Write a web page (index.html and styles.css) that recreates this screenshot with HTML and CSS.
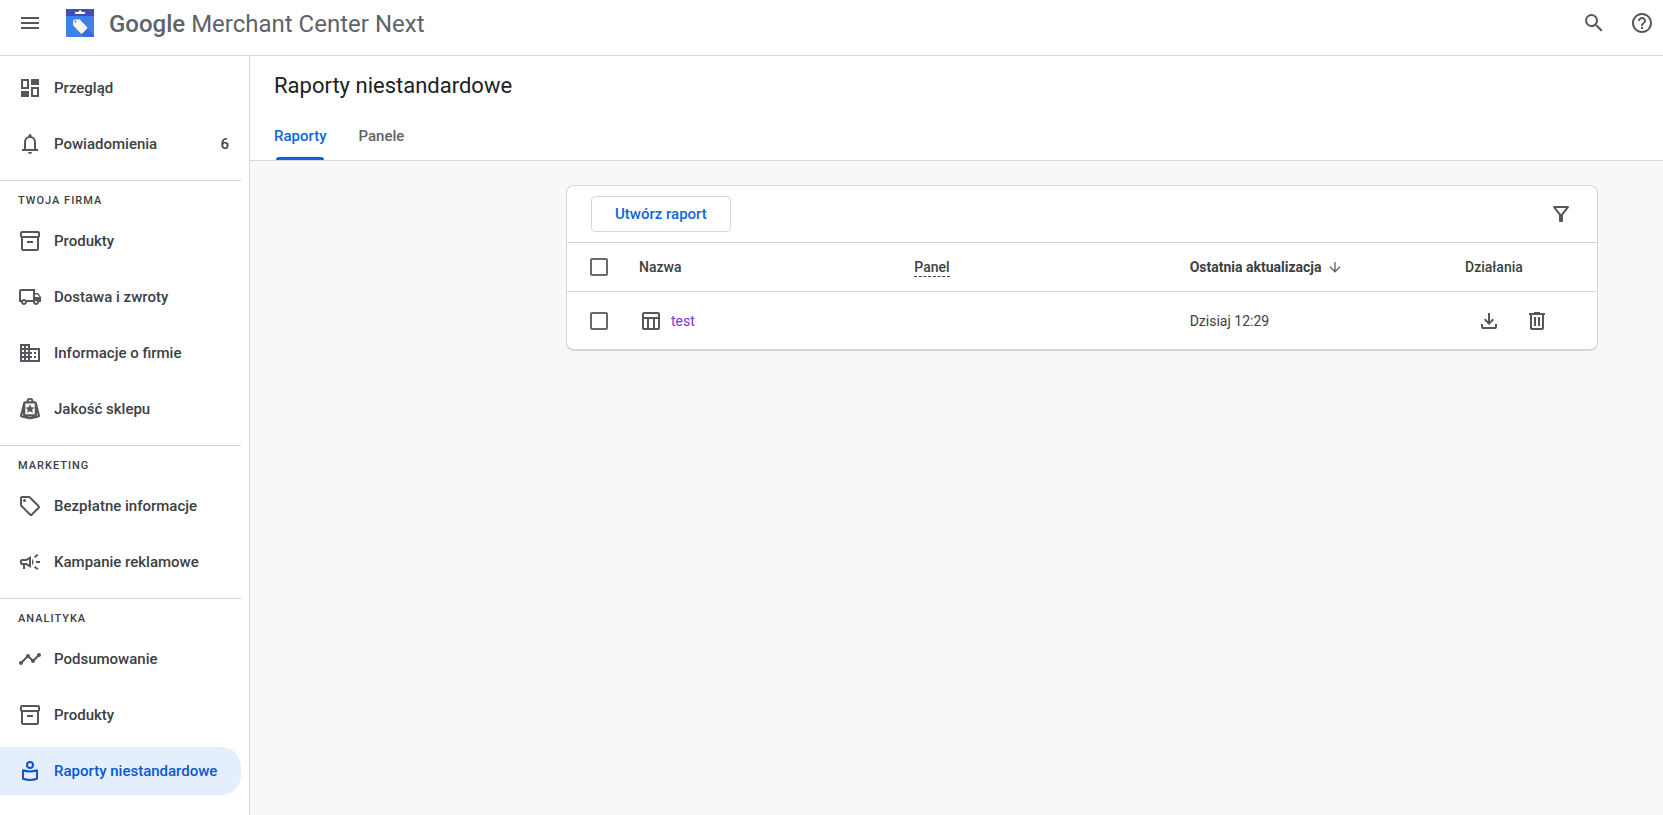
FILE: index.html
```html
<!DOCTYPE html>
<html lang="pl">
<head>
<meta charset="utf-8">
<meta name="viewport" content="width=device-width, initial-scale=1">
<title>Google Merchant Center Next</title>
<link rel="stylesheet" href="styles.css">
</head>
<body>
<svg class="sprite" aria-hidden="true">
  <symbol id="archive" viewBox="0 0 24 24"><path d="M20 2H4c-1 0-2 .9-2 2v3.010c0 .72.43 1.340 1 1.690V20c0 1.100 1.100 2 2 2h14c.9 0 2-.9 2-2V8.700c.57-.35 1-.97 1-1.690V4c0-1.100-1-2-2-2zm-1 18H5V9h14v11zm1-13H4V4h16v3zM9 12h6v2H9z"/></symbol>
</svg>
<header class="topbar">
  <button class="icon-btn" aria-label="Menu"><svg class="icon" viewBox="0 0 24 24"><path d="M3 18h18v-2H3v2zm0-5h18v-2H3v2zm0-7v2h18V6H3z"/></svg></button>
  <a class="brand" href="#">
    <svg class="logo" viewBox="0 0 28 28" aria-hidden="true">
      <rect width="28" height="28" rx="1" fill="#4080ec"/>
      <path d="M21 19l7 7v1q0 1-1 1H18l-4-4z" fill="#356fd6"/>
      <path d="M0 7V1q0-1 1-1h26q1 0 1 1v6z" fill="#3f51b0"/>
      <path d="M9 3h3.500a1.700 1.700 0 0 1 3.400 0H19v2H9z" fill="#fff"/>
      <path d="M7 12q0-1.500 1.500-1.500l5-.2 7.700 7.900q.6.700 0 1.400l-4.900 4.900q-.7.600-1.400 0L7.200 16.500z" fill="#f5f5f5"/>
      <circle cx="9.300" cy="12.600" r="1" fill="#4080ec"/>
    </svg>
    <span class="brand-name"><span class="google">Google</span> Merchant Center Next</span>
  </a>
  <div class="top-actions">
    <button class="icon-btn" aria-label="Szukaj"><svg class="icon" viewBox="0 0 24 24"><path d="M15.500 14h-.79l-.28-.27A6.470 6.470 0 0 0 16 9.500 6.500 6.500 0 1 0 9.500 16c1.610 0 3.090-.59 4.230-1.570l.27.28v.79l5 4.990L20.490 19l-4.990-5zm-6 0C7.010 14 5 11.990 5 9.500S7.010 5 9.500 5 14 7.010 14 9.500 11.990 14 9.500 14z"/></svg></button>
    <button class="icon-btn" aria-label="Pomoc"><svg class="icon" viewBox="0 0 24 24"><path d="M11 18h2v-2h-2v2zm1-16C6.480 2 2 6.480 2 12s4.480 10 10 10 10-4.480 10-10S17.520 2 12 2zm0 18c-4.410 0-8-3.590-8-8s3.590-8 8-8 8 3.590 8 8-3.590 8-8 8zm0-14c-2.210 0-4 1.790-4 4h2c0-1.100.9-2 2-2s2 .9 2 2c0 2-3 1.750-3 5h2c0-2.250 3-2.500 3-5 0-2.210-1.790-4-4-4z"/></svg></button>
  </div>
</header>
<div class="layout">
  <nav class="sidebar">
    <ul class="nav-group">
      <li><a class="nav-item" href="#"><svg class="icon" viewBox="0 0 24 24"><path d="M19 13v6h-4v-6h4M9 5v6H5V5h4m12-2h-8v6h8V3zM11 3H3v10h8V3zm10 8h-8v10h8V11zm-10 4H3v6h8v-6z"/></svg>Przegląd</a></li>
      <li><a class="nav-item" href="#"><svg class="icon" viewBox="0 0 24 24"><path d="M4 19v-2h2v-7c0-2.800 1.800-5.100 4.500-5.800V3.500a1.500 1.500 0 0 1 3 0v.7C16.200 4.900 18 7.200 18 10v7h2v2zm8 3a2 2 0 0 1-2-2h4a2 2 0 0 1-2 2zM8 17h8v-7a4 4 0 0 0-8 0z"/></svg>Powiadomienia<span class="count">6</span></a></li>
    </ul>
    <h2 class="nav-title">Twoja firma</h2>
    <ul class="nav-group">
      <li><a class="nav-item" href="#"><svg class="icon"><use href="#archive"/></svg>Produkty</a></li>
      <li><a class="nav-item" href="#"><svg class="icon" viewBox="0 0 24 24"><path d="M20 8h-3V4H3c-1.100 0-2 .9-2 2v11h2c0 1.660 1.340 3 3 3s3-1.340 3-3h6c0 1.660 1.340 3 3 3s3-1.340 3-3h2v-5l-3-4zM6 18c-.55 0-1-.45-1-1s.45-1 1-1 1 .45 1 1-.45 1-1 1zm9-3H8.220c-.55-.61-1.330-1-2.220-1s-1.670.39-2.220 1H3V6h12v9zm3 3c-.55 0-1-.45-1-1s.45-1 1-1 1 .45 1 1-.45 1-1 1zm-1-6V9.500h2.500l1.960 2.500H17z"/></svg>Dostawa i zwroty</a></li>
      <li><a class="nav-item" href="#"><svg class="icon" viewBox="0 0 24 24"><path d="M12 7V3H2v18h20V7H12zM6 19H4v-2h2v2zm0-4H4v-2h2v2zm0-4H4V9h2v2zm0-4H4V5h2v2zm4 12H8v-2h2v2zm0-4H8v-2h2v2zm0-4H8V9h2v2zm0-4H8V5h2v2zm10 12h-8v-2h2v-2h-2v-2h2v-2h-2V9h8v10zm-2-8h-2v2h2v-2zm0 4h-2v2h2v-2z"/></svg>Informacje o firmie</a></li>
      <li><a class="nav-item" href="#"><svg class="icon" viewBox="0 0 24 24"><path fill-rule="evenodd" d="M8.500 4.300a3.500 3.200 0 0 1 7 0H17q1.500 0 1.800 1.500L22 18.500q.3 1.700-1.500 2.100L14 22q-2 .4-4 0l-6.500-1.400q-1.800-.4-1.500-2.100L5.200 5.800Q5.500 4.300 7 4.300zm2 0h3a1.500 1.500 0 0 0-3 0zM7.300 6.600v10.600h9.400V6.600zM5 15.500l-.8 3 1.300.3q-.5-.5-.5-1.300zm14 0v2q0 .8-.5 1.300l1.300-.3zM9.500 19.600l2.500.5 2.500-.5z"/><path d="M12 7.300l1.350 3 3.250.3-2.450 2.150.75 3.250L12 14.300 9.100 16l.75-3.250L7.400 10.600l3.250-.3z"/></svg>Jakość sklepu</a></li>
    </ul>
    <h2 class="nav-title">Marketing</h2>
    <ul class="nav-group">
      <li><a class="nav-item" href="#"><svg class="icon" viewBox="0 0 24 24"><path d="M21.410 11.580l-9-9C12.050 2.220 11.550 2 11 2H4c-1.100 0-2 .9-2 2v7c0 .55.22 1.050.59 1.420l9 9c.36.36.86.58 1.410.58s1.050-.22 1.410-.59l7-7c.37-.36.59-.86.59-1.410s-.23-1.060-.59-1.420zM13 20.010L4 11V4h7v-.01l9 9-7 7.020z"/><circle cx="6.500" cy="6.500" r="1.500"/></svg>Bezpłatne informacje</a></li>
      <li><a class="nav-item" href="#"><svg class="icon" viewBox="0 0 24 24"><path d="M18 11v2h4v-2h-4zm-2 6.610c.96.710 2.210 1.650 3.200 2.390.4-.53.8-1.070 1.200-1.600-.99-.74-2.240-1.680-3.200-2.400-.4.540-.8 1.080-1.200 1.610zM20.400 5.600c-.4-.53-.8-1.070-1.200-1.600-.99.740-2.240 1.680-3.200 2.400.4.530.8 1.070 1.200 1.600.96-.72 2.210-1.650 3.200-2.400zM4 9c-1.100 0-2 .9-2 2v2c0 1.100.9 2 2 2h1v4h2v-4h1l5 3V6L8 9H4zm5.030 1.710L11 9.530v4.940l-1.970-1.180-.48-.29H4v-2h4.550l.48-.29zM15.500 12c0-1.330-.58-2.530-1.500-3.350v6.690c.92-.81 1.500-2.010 1.500-3.340z"/></svg>Kampanie reklamowe</a></li>
    </ul>
    <h2 class="nav-title">Analityka</h2>
    <ul class="nav-group">
      <li><a class="nav-item" href="#"><svg class="icon" viewBox="0 0 24 24"><path d="M23 8c0 1.100-.9 2-2 2-.18 0-.35-.02-.51-.07l-3.560 3.550c.05.160.07.340.07.520 0 1.100-.9 2-2 2s-2-.9-2-2c0-.18.02-.36.070-.52l-2.550-2.550c-.16.050-.34.070-.52.070s-.36-.02-.52-.07l-4.550 4.560c.05.160.07.330.07.510 0 1.100-.9 2-2 2s-2-.9-2-2 .9-2 2-2c.18 0 .35.020.51.070l4.560-4.550C8.020 9.360 8 9.180 8 9c0-1.100.9-2 2-2s2 .9 2 2c0 .18-.02.36-.07.520l2.550 2.550c.16-.05.34-.07.52-.07s.36.020.52.070l3.550-3.560C19.020 8.350 19 8.180 19 8c0-1.100.9-2 2-2s2 .9 2 2z"/></svg>Podsumowanie</a></li>
      <li><a class="nav-item" href="#"><svg class="icon"><use href="#archive"/></svg>Produkty</a></li>
      <li><a class="nav-item active" href="#" aria-current="page"><svg class="icon" viewBox="0 0 24 24"><g fill="none" stroke="currentColor" stroke-width="2"><circle cx="12" cy="6" r="3"/><path d="M5 11.300q7 2.400 14 0v8.400q-7 2.400-14 0z" stroke-linejoin="round"/></g></svg>Raporty niestandardowe</a></li>
    </ul>
  </nav>
  <main class="main">
    <div class="page-head">
      <h1>Raporty niestandardowe</h1>
      <div class="tabs" role="tablist">
        <button class="tab selected" role="tab" aria-selected="true">Raporty</button>
        <button class="tab" role="tab" aria-selected="false">Panele</button>
      </div>
    </div>
    <section class="content">
      <div class="card">
        <div class="toolbar">
          <button class="create">Utwórz raport</button>
          <button class="icon-btn" aria-label="Filtruj"><svg class="icon" viewBox="0 0 24 24"><path fill-rule="evenodd" d="M5.100 4h13.800c1 0 1.400 1 .8 1.700L14 13v6a1 1 0 0 1-1 1h-2a1 1 0 0 1-1-1v-6L4.300 5.700C3.700 5 4.100 4 5.100 4zM7 6l5 6.300L17 6z"/></svg></button>
        </div>
        <table class="reports">
          <thead>
            <tr>
              <th class="col-check"><input type="checkbox" aria-label="Zaznacz wszystko"></th>
              <th>Nazwa</th>
              <th><span class="hint">Panel</span></th>
              <th class="sorted" aria-sort="descending"><span class="sort">Ostatnia aktualizacja<svg class="arrow" viewBox="0 0 12 12" aria-hidden="true"><path d="M6 1v9.500M1 5.800l5 5 5-5" fill="none" stroke="currentColor" stroke-width="1.300"/></svg></span></th>
              <th class="col-actions">Działania</th>
            </tr>
          </thead>
          <tbody>
            <tr>
              <td class="col-check"><input type="checkbox" aria-label="Zaznacz test"></td>
              <td><a class="report" href="#"><svg class="icon" viewBox="0 0 24 24"><path fill-rule="evenodd" d="M5 3h14a2 2 0 0 1 2 2v14a2 2 0 0 1-2 2H5a2 2 0 0 1-2-2V5a2 2 0 0 1 2-2zm0 2v3h14V5zm0 5v9h3v-9zm5 0v9h4v-9zm6 0v9h3v-9z"/></svg>test</a></td>
              <td></td>
              <td>Dzisiaj 12:29</td>
              <td class="col-actions"><div class="actions">
                <button class="icon-btn" aria-label="Pobierz"><svg class="icon" viewBox="0 0 24 24"><path d="M12 16l-5-5 1.400-1.450 2.600 2.600V4h2v8.150l2.600-2.600L17 11zm-6 4a2 2 0 0 1-2-2v-3h2v3h12v-3h2v3a2 2 0 0 1-2 2z"/></svg></button>
                <button class="icon-btn" aria-label="Usuń"><svg class="icon" viewBox="0 0 24 24"><path fill-rule="evenodd" d="M9 3h6v1h5v2h-1v13a2 2 0 0 1-2 2H7a2 2 0 0 1-2-2V6H4V4h5zM7 6v13h10V6zm2 2h2v9H9zm4 0h2v9h-2z"/></svg></button>
              </div></td>
            </tr>
          </tbody>
        </table>
      </div>
    </section>
  </main>
</div>
</body>
</html>
```
FILE: styles.css
```css
* { box-sizing: border-box; }

body {
  margin: 0;
  min-height: 100vh;
  display: flex;
  flex-direction: column;
  background: #fff;
  color: #3c4043;
  font-family: Roboto, "Liberation Sans", sans-serif;
  font-size: 14px;
  line-height: 20px;
}

button {
  font: inherit;
  color: inherit;
  cursor: pointer;
}

a { text-decoration: none; }

.sprite { display: none; }

.icon {
  display: block;
  flex: none;
  width: 24px;
  height: 24px;
  fill: currentColor;
}

.icon-btn {
  padding: 0;
  border: 0;
  background: none;
  color: #54585d;
}

.topbar {
  display: flex;
  align-items: center;
  height: 56px;
  padding: 0 9px 10px 18px;
  border-bottom: 1px solid #d5d7da;
}

.brand {
  display: flex;
  align-items: center;
  gap: 15px;
  margin-left: 24px;
  color: #5f6368;
}

.logo {
  width: 28px;
  height: 28px;
}

.brand-name {
  padding-top: 2px;
  font-size: 24px;
  line-height: 28px;
}

.google { font-weight: 500; }

.top-actions {
  display: flex;
  gap: 24px;
  margin-left: auto;
}

.layout {
  display: flex;
  flex: 1;
}

.sidebar {
  flex: none;
  width: 250px;
  padding: 4px 8px 16px 0;
  border-right: 1px solid #d5d7da;
}

.nav-group {
  margin: 0;
  padding: 0 0 8px;
  list-style: none;
}

.nav-group li {
  height: 56px;
  padding-top: 4px;
}

.nav-item {
  display: flex;
  align-items: center;
  gap: 12px;
  height: 48px;
  padding: 0 12px 0 18px;
  border-radius: 0 20px 20px 0;
  color: #3c4043;
  font-size: 15px;
  font-weight: 500;
  white-space: nowrap;
}

.nav-item .icon { color: #54585d; }

.nav-item.active {
  background: #e4eefd;
  color: #0b57d0;
}

.nav-item.active .icon { color: inherit; }

.count { margin-left: auto; }

.nav-title {
  height: 33px;
  margin: 0;
  padding: 10px 0 0 18px;
  border-top: 1px solid #d5d7da;
  font-size: 11px;
  font-weight: 500;
  letter-spacing: 1px;
  text-transform: uppercase;
}

.main {
  flex: 1;
  min-width: 0;
  background: #f6f8fa;
}

.page-head {
  padding: 16px 24px 0;
  border-bottom: 1px solid #d5d7da;
  background: #fff;
}

h1 {
  margin: 0;
  color: #202124;
  font-size: 22px;
  font-weight: 400;
  line-height: 28px;
}

.tabs {
  display: flex;
  gap: 32px;
  margin-top: 12px;
}

.tab {
  position: relative;
  height: 48px;
  padding: 0;
  border: 0;
  background: none;
  color: #5f6368;
  font-size: 15px;
  font-weight: 500;
}

.tab.selected { color: #0b66de; }

.tab.selected::after {
  content: "";
  position: absolute;
  right: 2px;
  bottom: 0;
  left: 2px;
  height: 3px;
  border-radius: 3px 3px 0 0;
  background: #0b66de;
}

.content { padding: 24px 65px 24px 316px; }

.card {
  border: 1px solid #d5d7da;
  border-bottom-width: 2px;
  border-radius: 8px;
  background: #fff;
}

.toolbar {
  display: flex;
  align-items: center;
  justify-content: space-between;
  height: 57px;
  padding: 0 24px;
  border-bottom: 1px solid #d5d7da;
}

.create {
  height: 36px;
  padding: 0 23px;
  border: 1px solid #d5d7da;
  border-radius: 4px;
  background: #fff;
  color: #0b66de;
  font-size: 15px;
  font-weight: 500;
}

.reports {
  width: 100%;
  border-collapse: separate;
  border-spacing: 0;
  table-layout: fixed;
}

.reports th {
  height: 49px;
  padding: 0;
  border-bottom: 1px solid #d5d7da;
  font-weight: 500;
  text-align: left;
}

.reports td {
  height: 57px;
  padding: 0;
}

.reports .col-check {
  width: 72px;
  padding-left: 23px;
}

.reports .col-actions { width: 132px; }
.reports .sorted { font-weight: 700; }

input[type="checkbox"] {
  display: block;
  width: 18px;
  height: 18px;
  margin: 0;
  border: 2px solid #666a6e;
  border-radius: 2px;
  appearance: none;
}

input[type="checkbox"]:checked { background: #0b66de; }

.hint {
  display: inline-block;
  border-bottom: 1px dashed #3c4043;
  line-height: 18px;
}

.sort {
  display: flex;
  align-items: center;
  gap: 7px;
}

.arrow {
  width: 12px;
  height: 12px;
  color: #5f6368;
}

.report {
  display: flex;
  align-items: center;
  gap: 8px;
  color: #8430ce;
}

.report .icon { color: #54585d; }

.actions {
  display: flex;
  gap: 24px;
  padding-left: 12px;
}
```
